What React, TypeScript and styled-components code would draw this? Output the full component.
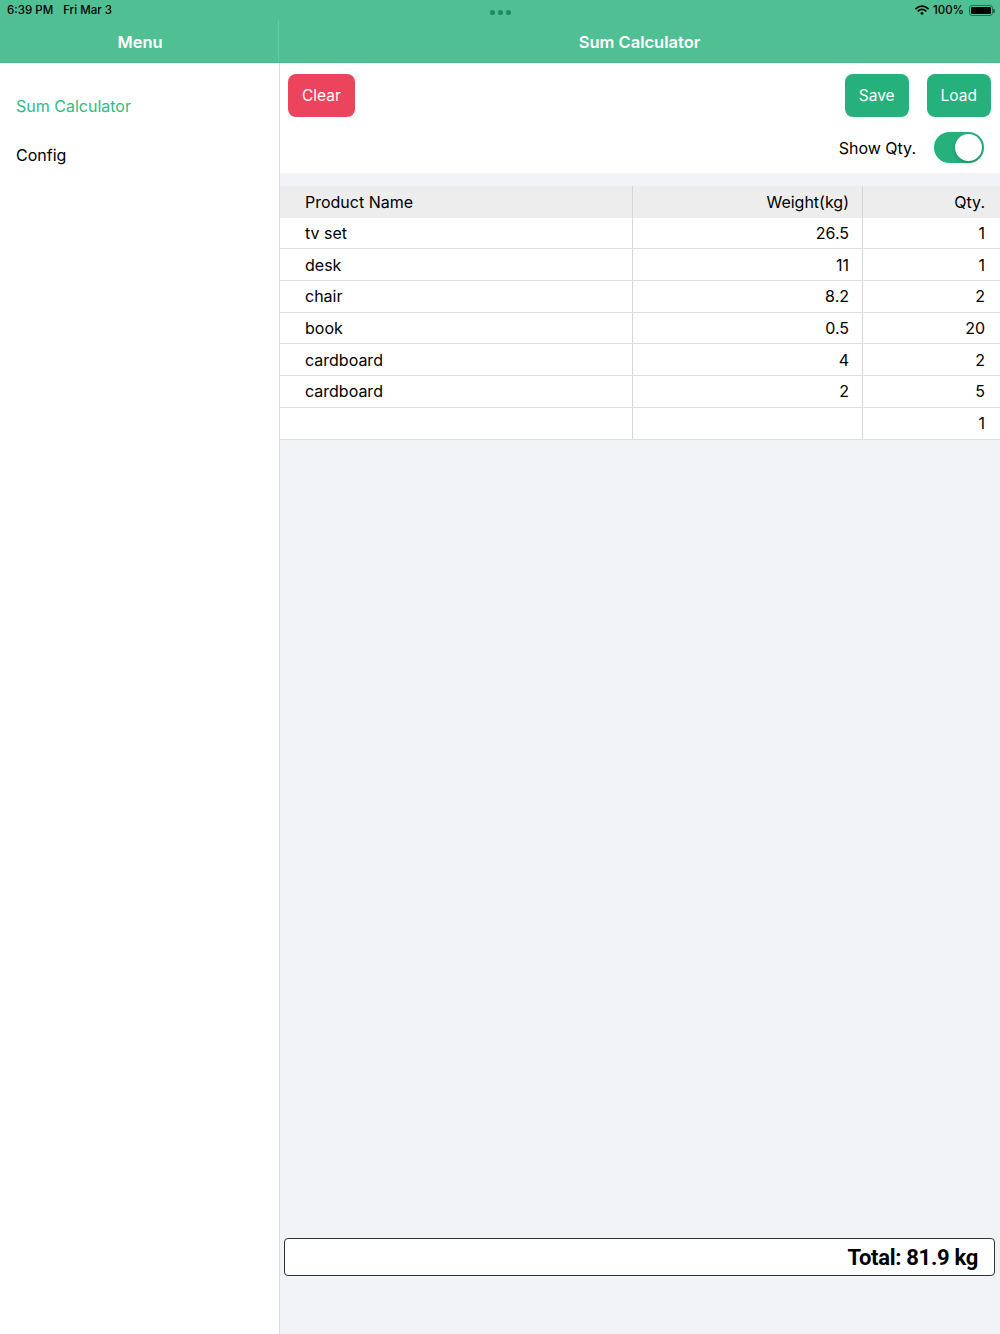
import { useState } from "react";
import styled, { createGlobalStyle } from "styled-components";

const rows = [
  { name: "tv set", weight: "26.5", qty: "1" },
  { name: "desk", weight: "11", qty: "1" },
  { name: "chair", weight: "8.2", qty: "2" },
  { name: "book", weight: "0.5", qty: "20" },
  { name: "cardboard", weight: "4", qty: "2" },
  { name: "cardboard", weight: "2", qty: "5" },
  { name: "", weight: "", qty: "1" },
];

function App() {
  const [showQty, setShowQty] = useState(true);

  return (
    <>
      <GlobalStyle />
      <Screen>
        <TopBar>
          <StatusBar>
            <StatusLeft>
              <span>6:39 PM</span>
              <span>Fri Mar 3</span>
            </StatusLeft>
            <Dots>
              <Dot />
              <Dot />
              <Dot />
            </Dots>
            <StatusRight>
              <svg width="14" height="10" viewBox="0 0 14 10">
                <path d="M1 3.6a8.5 8.5 0 0 1 12 0" stroke="#000" strokeWidth="1.8" fill="none" strokeLinecap="round" />
                <path d="M3.3 5.9a5.2 5.2 0 0 1 7.4 0" stroke="#000" strokeWidth="1.8" fill="none" strokeLinecap="round" />
                <circle cx="7" cy="8.4" r="1.4" fill="#000" />
              </svg>
              <span>100%</span>
              <Battery>
                <BatteryFill />
              </Battery>
            </StatusRight>
          </StatusBar>
          <Titles>
            <SideTitle>Menu</SideTitle>
            <MainTitle>Sum Calculator</MainTitle>
          </Titles>
        </TopBar>

        <Body>
          <Sidebar>
            <MenuItem $active>Sum Calculator</MenuItem>
            <MenuItem>Config</MenuItem>
          </Sidebar>

          <Main>
            <Toolbar>
              <ButtonRow>
                <Button $color="#ed445d">Clear</Button>
                <Spacer />
                <Button $color="#26b07c">Save</Button>
                <Button $color="#26b07c">Load</Button>
              </ButtonRow>
              <ToggleRow>
                <ToggleLabel>Show Qty.</ToggleLabel>
                <Toggle $on={showQty} onClick={() => setShowQty(!showQty)}>
                  <Knob $on={showQty} />
                </Toggle>
              </ToggleRow>
            </Toolbar>

            <Table>
              <HeaderRow>
                <Cell>Product Name</Cell>
                <Cell $right>Weight(kg)</Cell>
                <Cell $right>Qty.</Cell>
              </HeaderRow>
              {rows.map((r, i) => (
                <Row key={i}>
                  <Cell>{r.name}</Cell>
                  <Cell $right>{r.weight}</Cell>
                  <Cell $right>{r.qty}</Cell>
                </Row>
              ))}
            </Table>

            <Filler />

            <TotalBox>Total: 81.9 kg</TotalBox>
          </Main>
        </Body>
      </Screen>
    </>
  );
}

const GlobalStyle = createGlobalStyle`
  * { box-sizing: border-box; }
  html, body {
    margin: 0;
    padding: 0;
  }
  body {
    font-family: Inter, "Noto Sans", "Liberation Sans", sans-serif;
    color: #000;
  }
`;

const Screen = styled.div`
  width: 1000px;
  height: 1334px;
  display: flex;
  flex-direction: column;
  overflow: hidden;
`;

const TopBar = styled.div`
  background-color: #50bf94;
  height: 63px;
  border-bottom: 1px solid #49b68b;
  display: flex;
  flex-direction: column;
`;

const StatusBar = styled.div`
  height: 20px;
  display: flex;
  align-items: center;
  justify-content: space-between;
  padding: 0 7px;
  font-size: 11.5px;
  font-weight: 500;
`;

const StatusLeft = styled.div`
  display: flex;
  gap: 10px;
  width: 200px;
`;

const Dots = styled.div`
  display: flex;
  gap: 3px;
  margin-top: 4px;
`;

const Dot = styled.div`
  width: 5px;
  height: 5px;
  border-radius: 50%;
  background-color: #1e8a5e;
`;

const StatusRight = styled.div`
  width: 200px;
  display: flex;
  justify-content: flex-end;
  align-items: center;
  gap: 4px;
`;

const Battery = styled.div`
  width: 24px;
  height: 11px;
  border: 1px solid #2b6a52;
  border-radius: 3px;
  padding: 1px;
  margin-left: 1px;
  position: relative;
  &:after {
    content: "";
    position: absolute;
    right: -3px;
    top: 3px;
    width: 2px;
    height: 4px;
    background: #2b6a52;
    border-radius: 0 1px 1px 0;
  }
`;

const BatteryFill = styled.div`
  width: 100%;
  height: 100%;
  background: #000;
  border-radius: 1px;
`;

const Titles = styled.div`
  flex: 1;
  display: flex;
  align-items: center;
  color: #fff;
  font-size: 16.5px;
  font-weight: 600;
`;

const SideTitle = styled.div`
  width: 279px;
  text-align: center;
  border-right: 1px solid rgba(255, 255, 255, 0.15);
  align-self: stretch;
  display: flex;
  align-items: center;
  justify-content: center;
  padding: 2px 0 0 2px;
`;

const MainTitle = styled.div`
  flex: 1;
  text-align: center;
  padding-top: 2px;
`;

const Body = styled.div`
  flex: 1;
  display: flex;
`;

const Sidebar = styled.div`
  width: 280px;
  background-color: #fff;
  border-right: 1px solid #dcdcdc;
  padding-top: 32px;
  display: flex;
  flex-direction: column;
  gap: 26px;
`;

const MenuItem = styled.div<{ $active?: boolean }>`
  padding-left: 16px;
  font-size: 16px;
  line-height: 23px;
  color: ${(p) => (p.$active ? "#2dbb84" : "#000")};
`;

const Main = styled.div`
  flex: 1;
  background-color: #f2f3f7;
  display: flex;
  flex-direction: column;
`;

const Toolbar = styled.div`
  background-color: #fff;
  height: 110px;
  padding: 11px 9px 0 8px;
  margin-bottom: 13px;
`;

const ButtonRow = styled.div`
  display: flex;
  gap: 18px;
`;

const Spacer = styled.div`
  flex: 1;
`;

const Button = styled.button<{ $color: string }>`
  height: 43px;
  padding: 0 14px;
  border: none;
  border-radius: 8px;
  background-color: ${(p) => p.$color};
  color: #fff;
  font-family: inherit;
  font-size: 15.5px;
  cursor: pointer;
`;

const ToggleRow = styled.div`
  display: flex;
  justify-content: flex-end;
  align-items: center;
  gap: 18px;
  margin-top: 15px;
  padding-right: 7px;
`;

const ToggleLabel = styled.span`
  font-size: 16px;
`;

const Toggle = styled.div<{ $on: boolean }>`
  width: 50px;
  height: 31px;
  border-radius: 16px;
  background-color: ${(p) => (p.$on ? "#26b07c" : "#e5e5ea")};
  padding: 2px;
  display: flex;
  justify-content: ${(p) => (p.$on ? "flex-end" : "flex-start")};
  cursor: pointer;
`;

const Knob = styled.div<{ $on: boolean }>`
  width: 27px;
  height: 27px;
  border-radius: 50%;
  background-color: #fff;
  box-shadow: 0 2px 4px rgba(0, 0, 0, 0.2);
`;

const Table = styled.div`
  display: flex;
  flex-direction: column;
`;

const Row = styled.div`
  display: grid;
  grid-template-columns: 353px 230px 1fr;
  height: 31.7px;
  background-color: #fff;
  border-bottom: 1px solid #dedede;
`;

const HeaderRow = styled(Row)`
  background-color: #ededed;
  border-bottom: none;
`;

const Cell = styled.div<{ $right?: boolean }>`
  display: flex;
  align-items: center;
  justify-content: ${(p) => (p.$right ? "flex-end" : "flex-start")};
  padding: ${(p) => (p.$right ? "0 13px 0 0" : "0 0 0 25px")};
  font-size: 16px;
  border-right: 1px solid #d6d6d6;
  &:last-child {
    border-right: none;
    padding-right: 15px;
  }
`;

const Filler = styled.div`
  flex: 1;
`;

const TotalBox = styled.div`
  margin: 0 5px 58px 4px;
  height: 38px;
  border: 1px solid #333;
  border-radius: 4px;
  background-color: #fff;
  display: flex;
  align-items: center;
  justify-content: flex-end;
  padding-right: 16px;
  font-family: Roboto, "Liberation Sans", sans-serif;
  font-size: 22px;
  font-weight: 700;
  letter-spacing: -0.3px;
`;

export default App;
